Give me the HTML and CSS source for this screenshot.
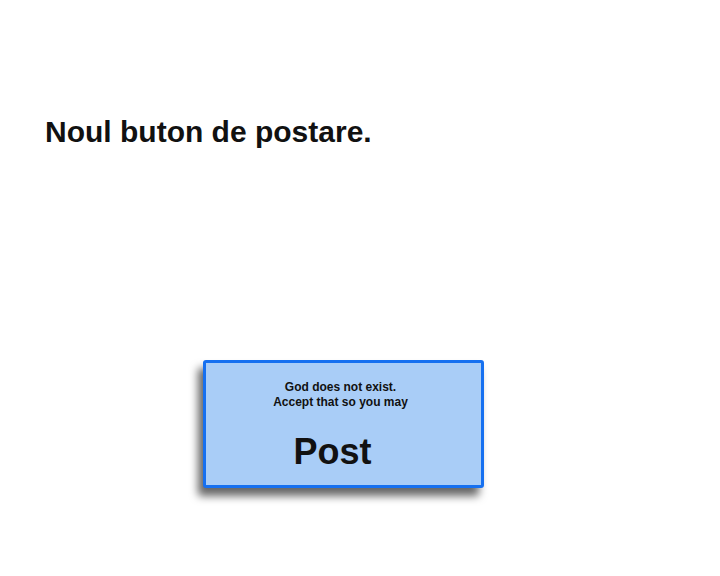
FILE: index.html
```html
<!DOCTYPE html>
<html lang="ro">
<head>
    <meta charset="UTF-8">
    <title>Noul buton de postare</title>
    <link rel="stylesheet" href="styles.css">
</head>
<body>
    <div class="page">
        <h1 class="title">Noul buton de postare.</h1>

        <button class="post-button" type="button">
            <span class="post-note">God does not exist.<br>Accept that so you may</span>
            <span class="post-label">Post</span>
        </button>
    </div>
</body>
</html>
```

FILE: styles.css
```css
body {
    margin: 0;
    background-color: #ffffff;
    color: #111111;
    font-family: "Liberation Sans", Arial, sans-serif;
}

.page {
    min-height: 576px;
    box-sizing: border-box;
    padding: 115px 0 40px 45px;
}

.title {
    margin: 0;
    font-size: 30px;
    font-weight: bold;
    line-height: 34px;
}

.post-button {
    display: flex;
    flex-direction: column;
    align-items: center;
    box-sizing: border-box;
    width: 281px;
    height: 128px;
    margin: 211px 0 0 158px;
    padding: 17px 0 0;
    background-color: #a9cdf7;
    border: 3px solid #1670f0;
    border-radius: 3px;
    box-shadow: -5px 8px 8px rgba(0, 0, 0, 0.6);
    color: #111111;
    font-family: inherit;
    cursor: pointer;
}

.post-note {
    padding-right: 6px;
    font-size: 12px;
    font-weight: bold;
    line-height: 15px;
    text-align: center;
}

.post-label {
    margin-top: 21px;
    padding-right: 22px;
    font-size: 36px;
    font-weight: bold;
    line-height: 41px;
}
```
